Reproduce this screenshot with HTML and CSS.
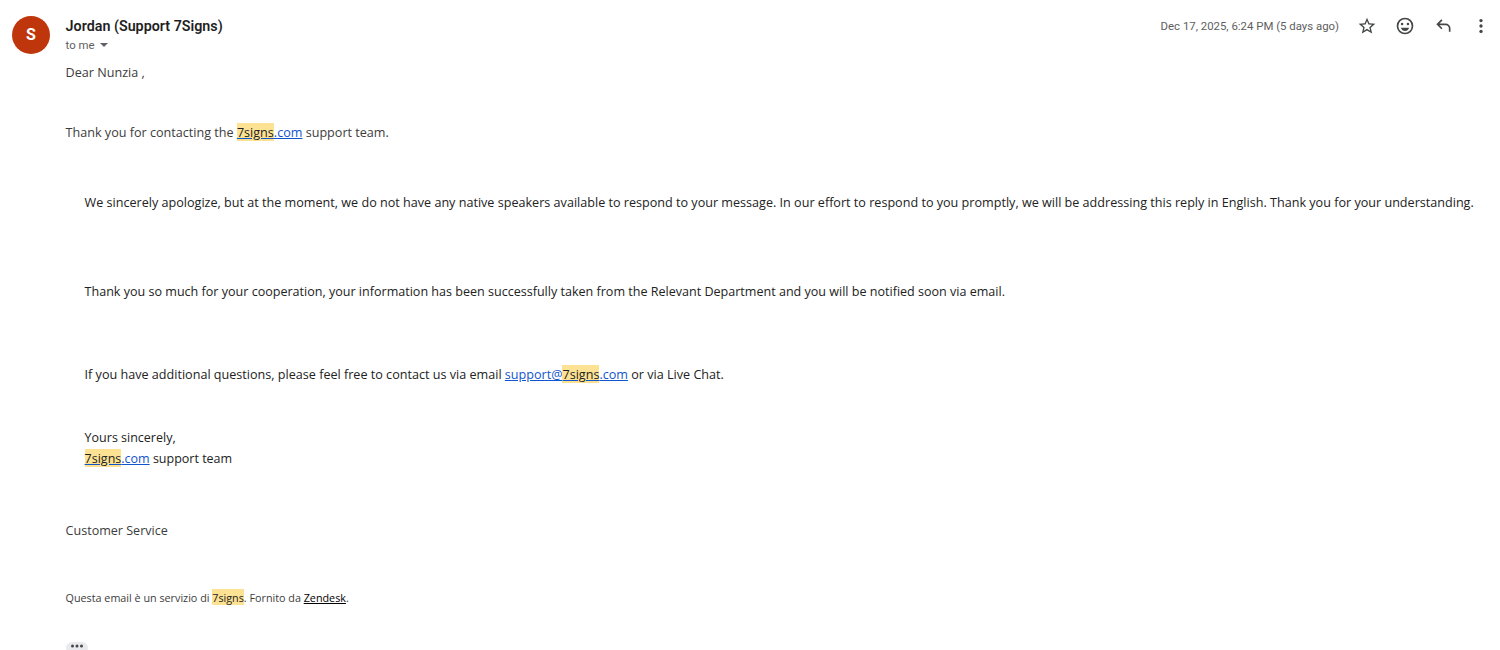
FILE: index.html
```html
<!DOCTYPE html>
<html lang="en">
<head>
<meta charset="utf-8">
<title>Message</title>
<link rel="stylesheet" href="styles.css">
</head>
<body>
<main class="message">
  <div class="avatar">S</div>
  <div class="content">
    <header class="head">
      <div class="sender">
        <div class="name">Jordan (Support 7Signs)</div>
        <div class="to">to me <svg class="caret" width="8" height="4" viewBox="0 0 10 5"><path d="M0 0h10L5 5z" fill="#5f6368"/></svg></div>
      </div>
      <div class="meta">
        <span class="date">Dec 17, 2025, 6:24 PM (5 days ago)</span>
        <svg class="icon" width="20" height="20" viewBox="0 0 24 24" fill="#444746"><path d="M22 9.24l-7.19-.62L12 2 9.19 8.63 2 9.24l5.46 4.73L5.82 21 12 17.27 18.18 21l-1.63-7.03L22 9.24zM12 15.4l-3.76 2.27 1-4.28-3.32-2.88 4.38-.38L12 6.1l1.71 4.04 4.38.38-3.32 2.88 1 4.28L12 15.4z"/></svg>
        <svg class="icon" width="20" height="20" viewBox="0 0 24 24" fill="#444746"><path d="M12 2a10 10 0 1 0 0 20 10 10 0 0 0 0-20zm0 18a8 8 0 1 1 0-16 8 8 0 0 1 0 16z"/><circle cx="15.5" cy="9.5" r="1.5"/><circle cx="8.5" cy="9.5" r="1.5"/><path d="M12 18c2.28 0 4.22-1.66 5-4H7c.78 2.34 2.72 4 5 4z"/></svg>
        <svg class="icon" width="20" height="20" viewBox="0 0 24 24" fill="#444746"><path d="M21 19h-2v-4a4 4 0 0 0-4-4H7.83l3.58 3.59L10 16l-6-6 6-6 1.41 1.41L7.83 9H15a6 6 0 0 1 6 6v4z"/></svg>
        <svg class="icon" width="20" height="20" viewBox="0 0 24 24" fill="#444746"><circle cx="12" cy="5.5" r="2"/><circle cx="12" cy="12" r="2"/><circle cx="12" cy="18.5" r="2"/></svg>
      </div>
    </header>
    <div class="body">
      <p class="greet">Dear Nunzia ,</p>
      <p class="thanks">Thank you for contacting the <a class="link" href="#"><mark>7signs</mark>.com</a> support team.</p>
      <div class="inner">
        <p class="p1">We sincerely apologize, but at the moment, we do not have any native speakers available to respond to your message. In our effort to respond to you promptly, we will be addressing this reply in English. Thank you for your understanding.</p>
        <p class="p2">Thank you so much for your cooperation, your information has been successfully taken from the Relevant Department and you will be notified soon via email.</p>
        <p class="p3">If you have additional questions, please feel free to contact us via email <a class="link" href="#">support@<mark>7signs</mark>.com</a> or via Live Chat.</p>
        <p class="p4">Yours sincerely,<br><a class="link" href="#"><mark>7signs</mark>.com</a> support team</p>
      </div>
      <p class="service">Customer Service</p>
      <p class="foot">Questa email è un servizio di <mark>7signs</mark>. Fornito da <a class="zen" href="#">Zendesk</a>.</p>
      <div class="more"><svg width="14" height="4" viewBox="0 0 14 4"><g fill="#444746"><circle cx="2.5" cy="2" r="1.5"/><circle cx="7" cy="2" r="1.5"/><circle cx="11.5" cy="2" r="1.5"/></g></svg></div>
    </div>
  </div>
</main>
</body>
</html>
```
FILE: styles.css
```css
html, body { margin: 0; padding: 0; background: #fff; height: 650px; overflow: hidden; }
body { font-family: "Open Sans", "Noto Sans", Arial, sans-serif; color: #222; }
.message { display: flex; align-items: flex-start; padding: 16px 0 0 12px; }
.avatar { flex: none; width: 38px; height: 38px; border-radius: 50%; background: #bf360c; color: #fff; font: 700 16px/38px Roboto, sans-serif; text-align: center; }
.content { flex: 1; margin-left: 15.6px; min-width: 0; }
.head { display: flex; justify-content: space-between; align-items: flex-start; }
.name { font: 600 14.3px/20px Roboto, sans-serif; color: #1f1f1f; }
.to { font: 400 11.4px/20px Roboto, sans-serif; color: #5e5e5e; margin-top: -1px; }
.caret { margin: 0 0 2px 3px; }
.meta { display: flex; align-items: center; height: 20px; }
.date { font: 400 11.4px/20px Roboto, sans-serif; color: #5e5e5e; margin-right: 9px; }
.icon { margin: 0 9px; }
.body { font-size: 12.6px; line-height: 20px; padding-top: 8px; }
.body p { margin: 0; }
.greet { color: #3c3c3c; }
.thanks { margin-top: 40px !important; color: #3c3c3c; }
.inner { padding-left: 19px; color: #222; }
.p1 { margin-top: 50px !important; white-space: nowrap; }
.p2 { margin-top: 69px !important; font-size: 12.55px; }
.p3 { margin-top: 63px !important; }
.p4 { margin-top: 41.5px !important; font-size: 12.5px; line-height: 21px; }
.service { margin-top: 52.5px !important; color: #3c3c3c; font-size: 12.55px; }
.foot { margin-top: 47px !important; font-size: 10.77px; color: #3c3c3c; }
.link { color: #1155cc; text-decoration: underline; }
.zen { color: #000; text-decoration: underline; }
mark { background: #fde293; color: #222; padding-top: 1px; }
.more { margin-top: 34px; width: 22px; height: 12px; border-radius: 6px; background: #e8eaed; display: flex; justify-content: center; padding-top: 2px; box-sizing: border-box; }
```
